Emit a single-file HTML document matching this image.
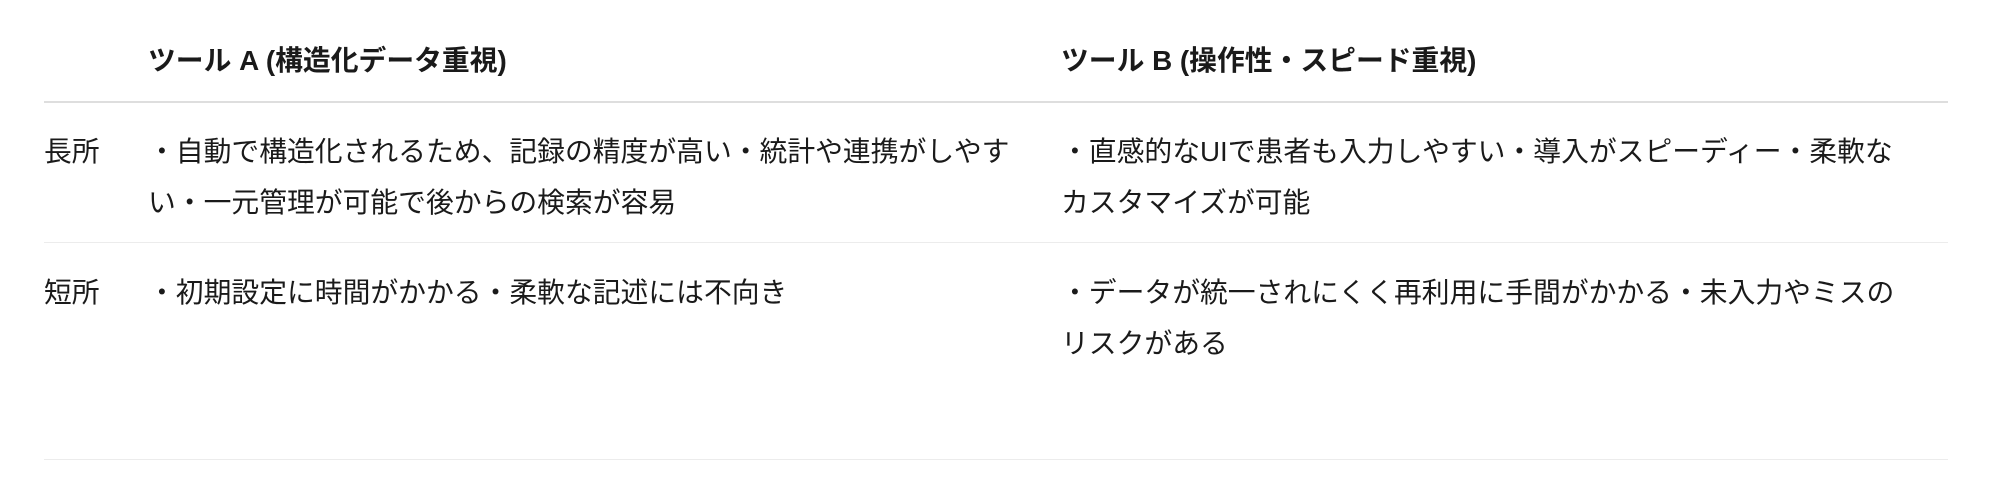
<!DOCTYPE html>
<html><head><meta charset="utf-8"><style>
html,body{margin:0;padding:0;background:#fff;}
body{width:1990px;height:494px;position:relative;overflow:hidden;font-family:"Liberation Sans","Noto Sans CJK JP",sans-serif;color:#1a1a1a;font-size:27.8px;}
.t{position:absolute;white-space:nowrap;line-height:51px;}
.h{font-weight:bold;}
.ln{position:absolute;left:44px;width:1904px;}
</style></head><body>
<div class="t h" style="left:148px;top:35px">ツール A (構造化データ重視)</div>
<div class="t h" style="left:1061px;top:35px">ツール B (操作性・スピード重視)</div>
<div class="ln" style="top:101px;height:2px;background:#dedede"></div>

<div class="t" style="left:44px;top:126px">長所</div>
<div class="t" style="left:148px;top:126px">・自動で構造化されるため、記録の精度が高い・統計や連携がしやす<br>い・一元管理が可能で後からの検索が容易</div>
<div class="t" style="left:1061px;top:126px">・直感的なUIで患者も入力しやすい・導入がスピーディー・柔軟な<br>カスタマイズが可能</div>
<div class="ln" style="top:242px;height:1px;background:#ececec"></div>

<div class="t" style="left:44px;top:267px">短所</div>
<div class="t" style="left:148px;top:267px">・初期設定に時間がかかる・柔軟な記述には不向き</div>
<div class="t" style="left:1061px;top:267px">・データが統一されにくく再利用に手間がかかる・未入力やミスの<br>リスクがある</div>
<div class="ln" style="top:459px;height:1px;background:#ececec"></div>
</body></html>
